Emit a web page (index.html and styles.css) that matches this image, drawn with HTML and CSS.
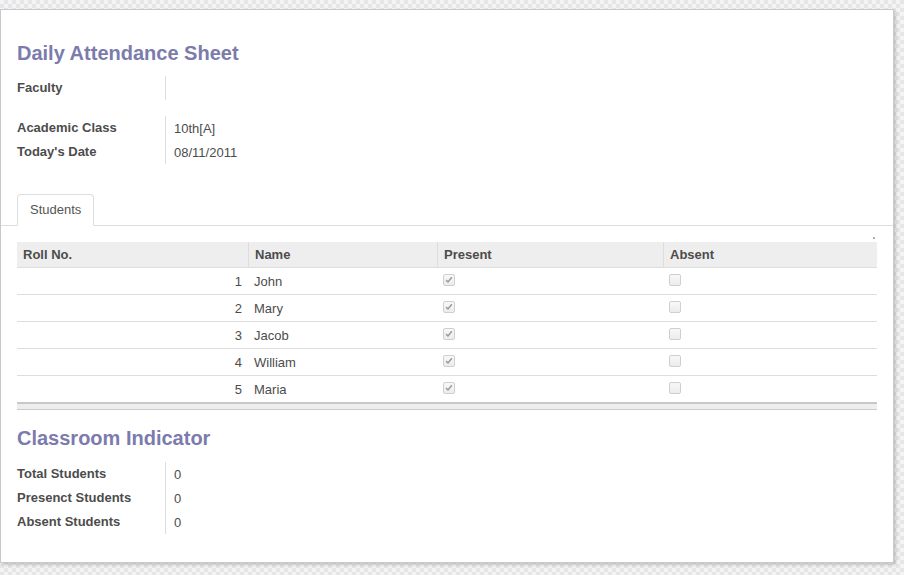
FILE: index.html
```html
<!DOCTYPE html>
<html>
<head>
<meta charset="utf-8">
<title>Daily Attendance Sheet</title>
<link rel="stylesheet" href="styles.css">
</head>
<body>
<div class="sheet">
  <h1 class="title">Daily Attendance Sheet</h1>
  <div class="group">
    <div class="label">Faculty</div><div class="value"></div>
  </div>
  <div class="group group-next">
    <div class="label">Academic Class</div><div class="value">10th[A]</div>
    <div class="label">Today's Date</div><div class="value">08/11/2011</div>
  </div>

  <div class="notebook">
    <ul class="tabs"><li class="tab active">Students</li></ul>
    <div class="page">
      <div class="list-tools"><span class="dot"></span></div>
      <table class="list">
        <colgroup>
          <col class="c-roll"><col class="c-name"><col class="c-present"><col class="c-absent">
        </colgroup>
        <thead>
          <tr><th>Roll No.</th><th class="sep">Name</th><th class="sep">Present</th><th class="sep">Absent</th></tr>
        </thead>
        <tbody>
          <tr><td class="num">1</td><td>John</td><td><span class="cb"><svg viewBox="0 0 12 12" width="10" height="10"><path d="M2.5 6.2 L4.8 8.4 L9.4 2.8" /></svg></span></td><td><span class="cb"></span></td></tr>
          <tr><td class="num">2</td><td>Mary</td><td><span class="cb"><svg viewBox="0 0 12 12" width="10" height="10"><path d="M2.5 6.2 L4.8 8.4 L9.4 2.8" /></svg></span></td><td><span class="cb"></span></td></tr>
          <tr><td class="num">3</td><td>Jacob</td><td><span class="cb"><svg viewBox="0 0 12 12" width="10" height="10"><path d="M2.5 6.2 L4.8 8.4 L9.4 2.8" /></svg></span></td><td><span class="cb"></span></td></tr>
          <tr><td class="num">4</td><td>William</td><td><span class="cb"><svg viewBox="0 0 12 12" width="10" height="10"><path d="M2.5 6.2 L4.8 8.4 L9.4 2.8" /></svg></span></td><td><span class="cb"></span></td></tr>
          <tr class="last"><td class="num">5</td><td>Maria</td><td><span class="cb"><svg viewBox="0 0 12 12" width="10" height="10"><path d="M2.5 6.2 L4.8 8.4 L9.4 2.8" /></svg></span></td><td><span class="cb"></span></td></tr>
        </tbody>
        <tfoot>
          <tr><td></td><td></td><td></td><td></td></tr>
        </tfoot>
      </table>
    </div>
  </div>

  <h1 class="title title-second">Classroom Indicator</h1>
  <div class="group">
    <div class="label">Total Students</div><div class="value">0</div>
    <div class="label">Presenct Students</div><div class="value">0</div>
    <div class="label">Absent Students</div><div class="value">0</div>
  </div>
</div>
</body>
</html>
```

FILE: styles.css
```css
html, body {
  margin: 0;
  padding: 0;
}
body {
  padding-top: 9px;
  min-height: 575px;
  box-sizing: border-box;
  font-family: "Liberation Sans", Arial, sans-serif;
  font-size: 13px;
  color: #4c4c4c;
  background-color: #f4f4f4;
  background-image: conic-gradient(#e6e6e6 25%, transparent 0 50%, #e6e6e6 0 75%, transparent 0);
  background-size: 8px 8px;
}
.sheet {
  box-sizing: border-box;
  width: 894px;
  background: #fff;
  border: 1px solid #c8c8d3;
  box-shadow: 2px 2px 3px rgba(0, 0, 0, 0.18);
  padding: 32px 16px 28px 16px;
}
.title {
  margin: 0 0 12px 0;
  font-size: 20px;
  line-height: 22px;
  font-weight: bold;
  color: #7c7bad;
}
.title-second {
  margin-top: 17px;
  margin-bottom: 13px;
}
.group {
  display: grid;
  grid-template-columns: 149px 1fr;
  grid-auto-rows: 24px;
  line-height: 24px;
}
.group-next {
  margin-top: 16px;
}
.label {
  font-weight: bold;
  border-right: 1px solid #dddddd;
}
.value {
  padding-left: 8px;
  padding-top: 1px;
}
.notebook {
  margin-top: 30px;
}
.tabs {
  list-style: none;
  margin: 0 -16px;
  padding: 0 0 0 16px;
  display: flex;
  border-bottom: 1px solid #dddddd;
}
.tab {
  margin-bottom: -1px;
  padding: 6px 12px;
  line-height: 18px;
  border: 1px solid transparent;
  border-radius: 4px 4px 0 0;
  color: #555;
}
.tab.active {
  background: #fff;
  border-color: #dddddd #dddddd transparent #dddddd;
}
.list-tools {
  height: 16px;
  display: flex;
  justify-content: flex-end;
  align-items: flex-end;
  padding-right: 2px;
}
.dot {
  width: 2px;
  height: 2px;
  background: #b0b0b0;
  margin-bottom: 3px;
}
.list {
  width: 860px;
  border-spacing: 0;
  table-layout: fixed;
}
.c-roll { width: 231px; }
.c-name { width: 189px; }
.c-present { width: 226px; }
.c-absent { width: 214px; }
.list th {
  text-align: left;
  font-weight: bold;
  background: #eeeeee;
  padding: 4px 6px 3px 6px;
  line-height: 18px;
  border-bottom: 1px solid #dddddd;
}
.list th.sep {
  border-left: 1px solid #dddddd;
}
.list td {
  padding: 5px 6px 3px 6px;
  line-height: 18px;
  vertical-align: top;
  border-bottom: 1px solid #dddddd;
}
.list td.num {
  text-align: right;
}
.list tr.last td {
  border-bottom: none;
}
.list tfoot td {
  padding: 0;
  height: 5px;
  background: #eeeeee;
  border-top: 2px solid #c8c8c8;
  border-bottom: 1px solid #cccccc;
}
.cb {
  display: block;
  box-sizing: border-box;
  width: 12px;
  height: 12px;
  margin-top: 1px;
  border: 1px solid #cfcfcf;
  border-radius: 2px;
  background: linear-gradient(#f8f8f8, #ececec);
}
.cb svg {
  display: block;
  fill: none;
  stroke: #9a9a9a;
  stroke-width: 1.8;
}
```
